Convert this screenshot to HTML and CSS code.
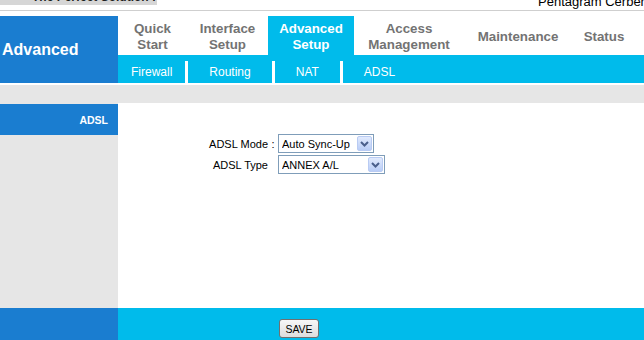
FILE: index.html
```html
<!DOCTYPE html>
<html lang="en">
<head>
  <meta charset="UTF-8" />
  <meta name="viewport" content="width=device-width, initial-scale=1.0"/>
  <title>Advanced Setup - ADSL</title>
  <link rel="stylesheet" href="styles.css">
</head>
<body>
  <div class="top">
    <div class="logo"><span>The Perfect Solution !</span></div>
    <div class="brand">Pentagram Cerberus P 6361</div>
  </div>

  <div class="header">
    <div class="section-title">Advanced</div>
    <div class="menus">
      <ul class="tabs">
        <li>Quick<br>Start</li>
        <li>Interface<br>Setup</li>
        <li class="active">Advanced<br>Setup</li>
        <li>Access<br>Management</li>
        <li>Maintenance</li>
        <li>Status</li>
      </ul>
      <ul class="subnav">
        <li>Firewall</li>
        <li>Routing</li>
        <li>NAT</li>
        <li>ADSL</li>
      </ul>
    </div>
  </div>

  <div class="band"></div>

  <div class="main">
    <div class="side">
      <div class="side-title">ADSL</div>
    </div>
    <div class="content">
      <form class="form">
        <label>ADSL Mode</label>
        <span class="colon">:</span>
        <div class="select mode">
          <select><option>Auto Sync-Up</option></select>
          <span class="arrow"><svg width="15" height="15" viewBox="0 0 15 15"><polyline points="4,6 7.5,9.5 11,6" fill="none" stroke="#4a5f8c" stroke-width="2"/></svg></span>
        </div>

        <label>ADSL Type</label>
        <span class="colon"></span>
        <div class="select type">
          <select><option>ANNEX A/L</option></select>
          <span class="arrow"><svg width="15" height="15" viewBox="0 0 15 15"><polyline points="4,6 7.5,9.5 11,6" fill="none" stroke="#4a5f8c" stroke-width="2"/></svg></span>
        </div>
      </form>
    </div>
  </div>

  <div class="footer">
    <div class="foot-side"></div>
    <div class="foot-main">
      <button class="save" type="button">SAVE</button>
    </div>
  </div>
</body>
</html>
```

FILE: styles.css
```css
body {
  margin: 0;
  width: 644px;
  height: 340px;
  overflow: hidden;
  font-family: "Liberation Sans", Arial, sans-serif;
  background-color: #ffffff;
  color: #000000;
}

.top {
  display: grid;
  grid-template-columns: 538px 1fr;
  height: 10px;
  border-bottom: 1px solid #cfcfcf;
  overflow: hidden;
}

.logo {
  width: 157px;
  height: 5px;
  background-color: #d6d6d6;
  overflow: hidden;
}

.logo span {
  display: block;
  margin-top: -9px;
  padding-left: 32px;
  font-size: 12px;
  line-height: 12px;
  font-weight: bold;
  color: #1e1e1e;
  white-space: nowrap;
}

.brand {
  margin-top: -5px;
  font-size: 13px;
  line-height: 13px;
  white-space: nowrap;
}

.header {
  display: flex;
  height: 67px;
  margin-top: 5px;
}

.section-title {
  width: 118px;
  flex: none;
  box-sizing: border-box;
  padding-left: 2px;
  display: flex;
  align-items: center;
  background-color: #1a7dd0;
  color: #ffffff;
  font-size: 16px;
  font-weight: bold;
}

.menus {
  flex: 1;
  display: flex;
  flex-direction: column;
}

.tabs {
  display: grid;
  grid-template-columns: 69px 81px 86px 110px 108px 64px;
  height: 39px;
  margin: 0;
  padding: 0;
  list-style: none;
}

.tabs li {
  display: flex;
  align-items: center;
  justify-content: center;
  text-align: center;
  padding-top: 2px;
  font-size: 13.33px;
  line-height: 16px;
  font-weight: bold;
  color: #737373;
}

.tabs li.active {
  background-color: #00bbeb;
  color: #ffffff;
}

.subnav {
  display: flex;
  height: 28px;
  margin: 0;
  padding: 0;
  list-style: none;
  background-color: #00bbeb;
}

.subnav li {
  align-self: flex-end;
  height: 22px;
  line-height: 22px;
  padding: 0 21px;
  border-left: 3px solid #ffffff;
  color: #ffffff;
  font-size: 12px;
}

.subnav li:first-child {
  border-left: none;
  padding: 0 13px;
}

.band {
  height: 18px;
  margin-top: 2px;
  background-color: #e6e6e6;
}

.main {
  display: flex;
  height: 205px;
}

.side {
  width: 118px;
  flex: none;
  padding-top: 1px;
  background-color: #e6e6e6;
}

.side-title {
  height: 31px;
  padding-right: 10px;
  line-height: 33px;
  text-align: right;
  background-color: #1a7dd0;
  color: #ffffff;
  font-size: 10.5px;
  font-weight: bold;
}

.content {
  flex: 1;
  padding-top: 31px;
}

.form {
  display: grid;
  grid-template-columns: 150px 10px auto;
  justify-content: start;
  align-items: center;
  row-gap: 2px;
  margin: 0;
  font-size: 11px;
}

.form label {
  text-align: right;
}

.form .colon {
  text-align: center;
}

.select {
  position: relative;
  height: 19px;
}

.select.mode {
  width: 96px;
}

.select.type {
  width: 107px;
}

.select select {
  appearance: none;
  -webkit-appearance: none;
  width: 100%;
  height: 100%;
  margin: 0;
  padding: 0 0 0 3px;
  border: 1px solid #7f9db9;
  border-radius: 0;
  background-color: #ffffff;
  font-family: "Liberation Sans", Arial, sans-serif;
  font-size: 11px;
  color: #000000;
}

.arrow {
  position: absolute;
  top: 2px;
  right: 2px;
  width: 15px;
  height: 15px;
  box-sizing: border-box;
  border: 1px solid #b9cbf3;
  border-radius: 2px;
  background: linear-gradient(#e1eafd, #b9cdf7);
  pointer-events: none;
}

.arrow svg {
  display: block;
  margin: -1px 0 0 -1px;
}

.footer {
  display: flex;
  height: 32px;
}

.foot-side {
  width: 118px;
  flex: none;
  background-color: #1a7dd0;
}

.foot-main {
  flex: 1;
  padding: 11px 0 0 161px;
  background-color: #00bbeb;
}

.save {
  display: block;
  width: 40px;
  height: 19px;
  padding: 0;
  border: 1px solid #707070;
  border-radius: 3px;
  background: linear-gradient(#f7f7f7, #dddddd);
  font-family: "Liberation Sans", Arial, sans-serif;
  font-size: 10.5px;
  color: #000000;
}
```
